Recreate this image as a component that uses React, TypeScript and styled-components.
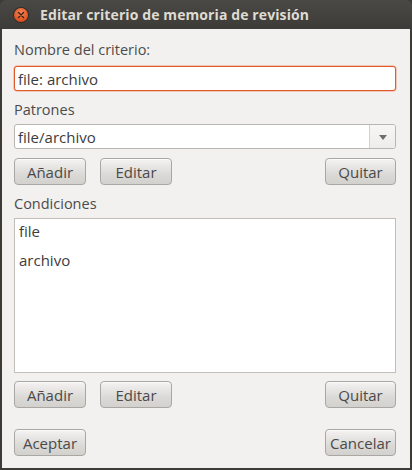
import React from "react";
import styled, { createGlobalStyle } from "styled-components";

const Global = createGlobalStyle`
  html, body { margin: 0; padding: 0; background: #3c3b37; }
  body { font-family: "Open Sans", "DejaVu Sans", sans-serif; }
`;

const Window = styled.div`
  width: 412px;
  height: 470px;
  box-sizing: border-box;
  background: #3c3b37;
  border-radius: 6px 6px 0 0;
  padding: 0 2px 2px 2px;
  display: flex;
  flex-direction: column;
`;

const TitleBar = styled.div`
  height: 29px;
  flex: none;
  display: flex;
  align-items: center;
  gap: 12px;
  padding-left: 12px;
  background: linear-gradient(#4a4945, #3c3b37);
  border-radius: 6px 6px 0 0;
  margin: 0 -2px;
`;

const CloseBtn = styled.div`
  width: 14px;
  height: 14px;
  border-radius: 50%;
  background: radial-gradient(circle at 50% 35%, #f5875a, #e0501e 70%, #c8431a);
  box-shadow: 0 0 0 1px #2e2d2a;
  display: flex;
  align-items: center;
  justify-content: center;
  margin-left: 2px;
`;

const Title = styled.div`
  color: #dfdbd2;
  font-family: "Open Sans", "DejaVu Sans", sans-serif;
  font-weight: 700;
  font-size: 14px;
  letter-spacing: 0.1px;
`;

const Content = styled.div`
  flex: 1;
  background: #f2f1f0;
  padding: 12px 14px 0 12px;
  display: flex;
  flex-direction: column;
  color: #3c3c3c;
  font-size: 14.5px;
`;

const Label = styled.div<{ $mt?: number }>`
  height: 17px;
  line-height: 17px;
  margin-top: ${(p) => p.$mt ?? 0}px;
  color: #4c4c4c;
`;

const Entry = styled.div<{ $focus?: boolean; $mt?: number }>`
  height: 25px;
  box-sizing: border-box;
  margin-top: ${(p) => p.$mt ?? 0}px;
  background: #ffffff;
  border: 1px solid ${(p) => (p.$focus ? "#e05a2a" : "#b9b6b1")};
  box-shadow: ${(p) => (p.$focus ? "0 0 0 0.5px #f0a080" : "none")};
  border-radius: 3px;
  display: flex;
  align-items: center;
  padding-left: 3px;
  color: #3c3c3c;
  font-size: 15px;
`;

const Combo = styled(Entry)`
  padding-left: 0;
  overflow: hidden;
`;

const ComboText = styled.div`
  flex: 1;
  padding-left: 3px;
`;

const ComboButton = styled.div`
  width: 25px;
  height: 100%;
  border-left: 1px solid #d3d0cb;
  background: linear-gradient(#f7f6f5, #eeedeb);
  display: flex;
  align-items: center;
  justify-content: center;
`;

const Arrow = styled.div`
  width: 0;
  height: 0;
  border-left: 4px solid transparent;
  border-right: 4px solid transparent;
  border-top: 5px solid #6e6d6a;
  margin-top: 1px;
`;

const ButtonRow = styled.div<{ $mt: number }>`
  display: flex;
  align-items: center;
  gap: 14px;
  margin-top: ${(p) => p.$mt}px;
`;

const Spacer = styled.div`
  flex: 1;
`;

const Button = styled.button<{ $w?: number }>`
  width: ${(p) => p.$w ?? 72}px;
  height: 27px;
  box-sizing: border-box;
  border: 1px solid #a9a7a3;
  border-radius: 4px;
  background: linear-gradient(#f4f3f2, #dcdad7 60%, #d3d1cd);
  box-shadow: inset 0 1px 0 #fbfbfa;
  font-family: inherit;
  font-size: 15px;
  color: #4a4a4a;
  padding: 0;
  display: flex;
  align-items: center;
  justify-content: center;
`;

const ListBox = styled.div`
  height: 155px;
  box-sizing: border-box;
  margin-top: 6px;
  background: #ffffff;
  border: 1px solid #c2bfba;
  padding-top: 2px;
  display: flex;
  flex-direction: column;
`;

const ListItem = styled.div`
  height: 29px;
  line-height: 20px;
  padding-left: 4px;
  font-size: 15px;
  color: #3c3c3c;
`;

export default function App() {
  return (
    <>
      <Global />
      <Window>
        <TitleBar>
          <CloseBtn>
            <svg width="8" height="8" viewBox="0 0 8 8">
              <path d="M1.5 1.5 L6.5 6.5 M6.5 1.5 L1.5 6.5" stroke="#3a2418" strokeWidth="1.4" strokeLinecap="round" />
            </svg>
          </CloseBtn>
          <Title>Editar criterio de memoria de revisión</Title>
        </TitleBar>
        <Content>
          <Label>Nombre del criterio:</Label>
          <Entry $focus $mt={8}>file: archivo</Entry>
          <Label $mt={10}>Patrones</Label>
          <Combo $mt={6}>
            <ComboText>file/archivo</ComboText>
            <ComboButton>
              <Arrow />
            </ComboButton>
          </Combo>
          <ButtonRow $mt={9}>
            <Button>Añadir</Button>
            <Button>Editar</Button>
            <Spacer />
            <Button $w={71}>Quitar</Button>
          </ButtonRow>
          <Label $mt={10}>Condiciones</Label>
          <ListBox>
            <ListItem>file</ListItem>
            <ListItem>archivo</ListItem>
          </ListBox>
          <ButtonRow $mt={8}>
            <Button>Añadir</Button>
            <Button>Editar</Button>
            <Spacer />
            <Button $w={71}>Quitar</Button>
          </ButtonRow>
          <ButtonRow $mt={21}>
            <Button>Aceptar</Button>
            <Spacer />
            <Button $w={71}>Cancelar</Button>
          </ButtonRow>
        </Content>
      </Window>
    </>
  );
}
